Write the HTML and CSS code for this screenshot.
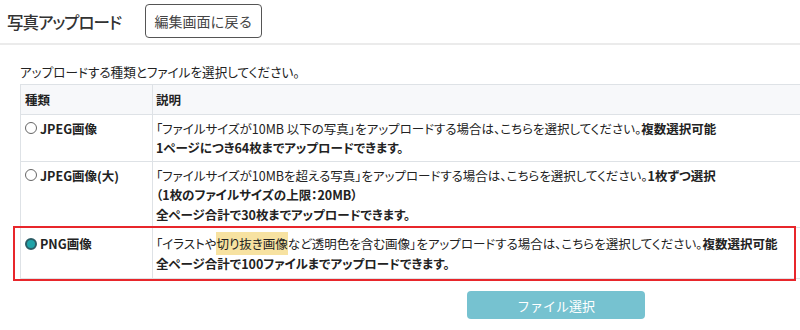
FILE: index.html
```html
<!DOCTYPE html>
<html lang="ja">
<head>
  <meta charset="UTF-8">
  <title>写真アップロード</title>
  <link rel="stylesheet" href="styles.css">
</head>
<body>
  <header class="page-header">
    <h1>写真アップロード</h1>
    <button class="back-btn">編集画面に戻る</button>
  </header>

  <main class="content">
    <p class="lead">アップロードする種類とファイルを選択してください。</p>

    <div class="table-wrap">
      <table class="type-table">
        <thead>
          <tr>
            <th class="col-type">種類</th>
            <th>説明</th>
          </tr>
        </thead>
        <tbody>
          <tr>
            <td class="col-type"><label><input type="radio" name="kind"> JPEG画像</label></td>
            <td>「ファイルサイズが10MB 以下の写真」をアップロードする場合は、こちらを選択してください。<b>複数選択可能</b><br>
              <b>1ページにつき64枚までアップロードできます。</b></td>
          </tr>
          <tr>
            <td class="col-type"><label><input type="radio" name="kind"> JPEG画像(大)</label></td>
            <td>「ファイルサイズが10MBを超える写真」をアップロードする場合は、こちらを選択してください。<b>1枚ずつ選択</b><br>
              <b>（1枚のファイルサイズの上限：20MB）</b><br>
              <b>全ページ合計で30枚までアップロードできます。</b></td>
          </tr>
          <tr class="selected">
            <td class="col-type"><label><input type="radio" name="kind" checked> PNG画像</label></td>
            <td>「イラストや<span class="mark">切り抜き画像</span>など透明色を含む画像」をアップロードする場合は、こちらを選択してください。<b>複数選択可能</b><br>
              <b>全ページ合計で100ファイルまでアップロードできます。</b></td>
          </tr>
        </tbody>
      </table>
      <div class="row-highlight"></div>
    </div>

    <div class="actions">
      <button class="select-btn">ファイル選択</button>
    </div>
  </main>
</body>
</html>
```

FILE: styles.css
```css
body {
  margin: 0;
  font-family: "Noto Sans CJK JP", "Noto Sans", sans-serif;
  font-feature-settings: "palt";
  color: #222;
  background: #fff;
  overflow: hidden;
}

.page-header {
  display: flex;
  align-items: center;
  height: 43px;
  padding: 0 0 0 7px;
  border-bottom: 2px solid #ebebeb;
}

.page-header h1 {
  margin: 0;
  font-size: 16.5px;
  font-weight: 500;
  letter-spacing: -1px;
  color: #333;
}

.back-btn {
  margin-left: 24px;
  margin-top: -1px;
  width: 117px;
  height: 34px;
  font-family: inherit;
  font-size: 14px;
  color: #444;
  background: #fff;
  border: 1px solid #555;
  border-radius: 4px;
  padding: 0;
}

.content {
  padding: 18px 0 0 20px;
}

.lead {
  margin: 0 0 3px;
  font-size: 12.6px;
  line-height: 18px;
}

.table-wrap {
  position: relative;
  width: 943px;
}

.type-table {
  width: 943px;
  border-collapse: collapse;
  font-size: 12.5px;
  line-height: 19.5px;
}

.type-table th,
.type-table td {
  border: 1px solid #dee2e6;
  text-align: left;
  vertical-align: top;
  padding: 4px 3px 3px;
}

.type-table th {
  background: #f7f8fa;
  padding: 5px 3px 4px;
  font-weight: bold;
}

.type-table .col-type {
  width: 124px;
  padding-left: 4px;
}

.type-table td.col-type {
  font-weight: bold;
}

.type-table tr.selected td {
  padding-top: 6px;
  padding-bottom: 4px;
  line-height: 20px;
}

.type-table label {
  display: inline-flex;
  align-items: center;
}

.type-table input[type="radio"] {
  appearance: none;
  width: 12px;
  height: 12px;
  margin: 0 3px 0 0;
  border: 1px solid #666;
  border-radius: 50%;
  background: #fff;
}

.type-table input[type="radio"]:checked {
  border: 2px solid #2b5d66;
  background: #1fa3a8;
}

.mark {
  background: #f7e2a1;
  padding: 2px 0;
}

.row-highlight {
  position: absolute;
  left: -7px;
  top: 142px;
  width: 779px;
  height: 51px;
  border: 2px solid #e8262b;
  pointer-events: none;
}

.actions {
  width: 1072px;
  text-align: center;
  margin-top: 12px;
}

.select-btn {
  width: 178px;
  height: 28px;
  font-family: inherit;
  font-size: 13px;
  color: #fff;
  background: #76c2d0;
  border: none;
  border-radius: 4px;
}
```
